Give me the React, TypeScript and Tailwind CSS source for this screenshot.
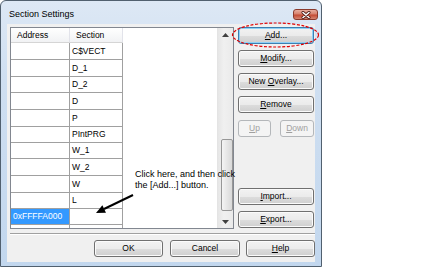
import React from "react";

type BtnProps = {
  children: React.ReactNode;
  w: string;
  disabled?: boolean;
  focused?: boolean;
};

function Btn({ children, w, disabled, focused }: BtnProps) {
  if (disabled) {
    return (
      <div
        className={`${w} h-[17px] shrink-0 rounded-[3px] border border-[#b4b7ba] bg-[#f4f4f4] text-[#a0a0a0] text-[8.5px] leading-none flex items-center justify-center`}
      >
        <span>{children}</span>
      </div>
    );
  }
  if (focused) {
    return (
      <div
        className={`${w} h-[17px] shrink-0 rounded-[3px] border border-[#3c7fb1] bg-[linear-gradient(180deg,#f2f2f2_0%,#ebebeb_50%,#dddddd_51%,#cfcfcf_100%)] shadow-[inset_0_0_0_1px_#8fd0f5] text-black text-[8.5px] leading-none flex items-center justify-center`}
      >
        <span>{children}</span>
      </div>
    );
  }
  return (
    <div
      className={`${w} h-[17px] shrink-0 rounded-[3px] border border-[#707070] bg-[linear-gradient(180deg,#f2f2f2_0%,#ebebeb_50%,#dddddd_51%,#cfcfcf_100%)] shadow-[inset_0_0_0_1px_#fbfbfb] text-black text-[8.5px] leading-none flex items-center justify-center`}
    >
      <span>{children}</span>
    </div>
  );
}

const U = ({ c }: { c: string }) => <span className="underline underline-offset-1">{c}</span>;

const rows: { s: string; tall: boolean }[] = [
  { s: "C$VECT", tall: true },
  { s: "D_1", tall: true },
  { s: "D_2", tall: false },
  { s: "D", tall: true },
  { s: "P", tall: true },
  { s: "PIntPRG", tall: false },
  { s: "W_1", tall: false },
  { s: "W_2", tall: true },
  { s: "W", tall: true },
  { s: "L", tall: false },
];

export default function App() {
  return (
    <div className="relative w-[434px] h-[268px] bg-white overflow-hidden font-['Liberation_Sans',Arial,sans-serif]">
      {/* Window */}
      <div className="w-[322px] h-[267px] rounded-t-[6px] border border-[#51606f] bg-[linear-gradient(180deg,#dde8f5_0%,#cfdff1_30%,#c2d7ee_100%)] flex flex-col">
        {/* Title bar */}
        <div className="h-[23px] shrink-0 flex items-start justify-between">
          <div className="ml-[8px] mt-[7px] text-[9px] leading-[12px] text-black">Section Settings</div>
          <div className="mr-[3px] mt-[8px] w-[25px] h-[11px] rounded-[3px] border border-[#8a3a2c] bg-[linear-gradient(180deg,#e8ad9e_0%,#d7816c_45%,#c44a33_55%,#d58570_100%)] flex items-center justify-center">
            <svg width="10" height="8" viewBox="0 0 10 8">
              <path d="M2 1.5 L8 6.5 M8 1.5 L2 6.5" stroke="#4a1a12" strokeWidth="3" strokeLinecap="round" />
              <path d="M2 1.5 L8 6.5 M8 1.5 L2 6.5" stroke="#ffffff" strokeWidth="1.6" strokeLinecap="round" />
            </svg>
          </div>
        </div>

        {/* Client area */}
        <div className="mx-[6px] h-[238px] shrink-0 bg-[#f0f0f0] flex flex-col pl-[3px] pt-[3px]">
          <div className="h-[202px] flex">
            {/* List */}
            <div className="w-[224px] h-[202px] border border-[#828790] bg-white flex">
              <div className="flex-1 flex flex-col">
                {/* Header */}
                <div className="h-[15px] shrink-0 flex">
                  <div className="w-[59px] h-full border-r border-b border-r-[#e2e3ea] border-b-[#d5d5d5] bg-[linear-gradient(180deg,#ffffff,#f1f2f4)] pl-[6px] flex items-center text-[8.5px] text-black">
                    Address
                  </div>
                  <div className="w-[53px] h-full border-r border-b border-r-[#e2e3ea] border-b-[#d5d5d5] bg-[linear-gradient(180deg,#ffffff,#f1f2f4)] pl-[6px] flex items-center text-[8.5px] text-black">
                    Section
                  </div>
                </div>
                {rows.map((r) => (
                  <div key={r.s} className={`${r.tall ? "h-[17px]" : "h-[16px]"} shrink-0 flex`}>
                    <div className="w-[59px] h-full border-r border-b border-[#a0a0a0]" />
                    <div className="w-[53px] h-full border-r border-b border-[#a0a0a0] pl-[2px] flex items-center text-[8.5px] text-black">
                      {r.s}
                    </div>
                  </div>
                ))}
                <div className="h-[16px] shrink-0 flex">
                  <div className="w-[59px] h-full border-r border-b border-[#a0a0a0] bg-[#3399ff] pl-[2px] flex items-center text-[8.5px] text-white">
                    0xFFFFA000
                  </div>
                  <div className="w-[53px] h-full border-r border-b border-[#a0a0a0]" />
                </div>
                <div className="flex-1 flex">
                  <div className="w-[59px] h-full border-r border-[#a0a0a0]" />
                  <div className="w-[53px] h-full border-r border-[#a0a0a0]" />
                </div>
              </div>
              {/* Scrollbar */}
              <div className="relative w-[16px] h-full bg-[linear-gradient(90deg,#e6e6e6,#f0f0f0_40%,#eaeaea)] border-l border-[#e4e4e4]">
                <div className="h-[13px] flex items-center justify-center">
                  <svg width="7" height="4" viewBox="0 0 7 4">
                    <path d="M0 4 L3.5 0 L7 4 Z" fill="#404040" />
                  </svg>
                </div>
                <div className="absolute left-[3px] top-[111px] w-[12px] h-[72px] rounded-[2px] border border-[#979797] bg-[linear-gradient(90deg,#f4f4f4,#e6e6e6_50%,#d9d9d9)]" />
                <div className="absolute left-0 bottom-0 w-full h-[13px] flex items-center justify-center">
                  <svg width="7" height="4" viewBox="0 0 7 4">
                    <path d="M0 0 L7 0 L3.5 4 Z" fill="#404040" />
                  </svg>
                </div>
              </div>
            </div>

            {/* Right buttons */}
            <div className="ml-[4px] w-[76px] h-[202px] flex flex-col pb-[1px]">
              <Btn w="w-[76px]" focused>
                <U c="A" />dd...
              </Btn>
              <div className="mt-[6px]">
                <Btn w="w-[76px]">
                  <U c="M" />odify...
                </Btn>
              </div>
              <div className="mt-[6px]">
                <Btn w="w-[76px]">
                  {"New "}
                  <U c="O" />verlay...
                </Btn>
              </div>
              <div className="mt-[6px]">
                <Btn w="w-[76px]">
                  <U c="R" />emove
                </Btn>
              </div>
              <div className="mt-[7px] flex justify-between">
                <Btn w="w-[33px]" disabled>
                  <U c="U" />p
                </Btn>
                <Btn w="w-[34px]" disabled>
                  <U c="D" />own
                </Btn>
              </div>
              <div className="flex-1" />
              <Btn w="w-[76px]">
                <U c="I" />mport...
              </Btn>
              <div className="mt-[6px]">
                <Btn w="w-[76px]">
                  <U c="E" />xport...
                </Btn>
              </div>
            </div>
          </div>

          {/* Separator */}
          <div className="mt-[4px] h-[2px] border-t border-b border-t-[#a0a0a0] border-b-white" />

          {/* Bottom buttons */}
          <div className="mt-[5px] flex justify-end">
            <Btn w="w-[69px]">OK</Btn>
            <div className="ml-[7px]">
              <Btn w="w-[70px]">Cancel</Btn>
            </div>
            <div className="ml-[6px]">
              <Btn w="w-[69px]">
                <U c="H" />elp
              </Btn>
            </div>
          </div>
        </div>
      </div>

      {/* Annotation text */}
      <div className="absolute left-[135px] top-[169px] text-[9px] leading-[11px] text-black whitespace-nowrap">
        Click here, and then click
        <br />
        the [Add...] button.
      </div>

      {/* Arrow and highlight ellipse */}
      <svg className="absolute left-0 top-0 pointer-events-none" width="434" height="268" viewBox="0 0 434 268">
        <line x1="133" y1="195" x2="104" y2="209" stroke="#000" strokeWidth="2" />
        <polygon points="96,213 102.4,205.2 106,212.8" fill="#000" />
        <ellipse cx="275.5" cy="35" rx="43" ry="12" fill="none" stroke="#e00000" strokeWidth="1.2" strokeDasharray="3 1.6" />
      </svg>
    </div>
  );
}
